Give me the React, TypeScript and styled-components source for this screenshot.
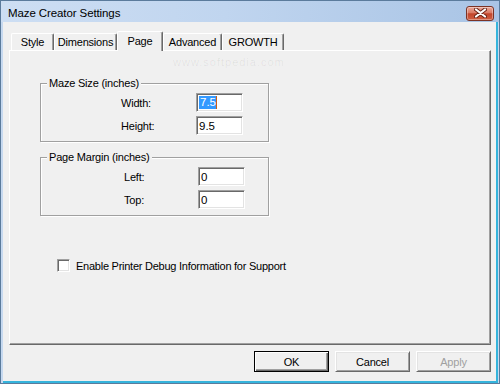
import React from "react";
import styled, { createGlobalStyle } from "styled-components";

const GlobalStyle = createGlobalStyle`
  html, body {
    margin: 0;
    padding: 0;
    background: #f0f0f0;
  }
  * {
    box-sizing: border-box;
  }
`;

const Window = styled.div`
  position: relative;
  width: 500px;
  height: 384px;
  display: flex;
  flex-direction: column;
  border: 1px solid #5b7b9c;
  padding: 0 1px 0 2px;
  background: #c6d9f0;
  font-family: "Liberation Sans", Arial, sans-serif;
  font-size: 11px;
  color: #000;
  overflow: hidden;
`;

const TitleBar = styled.div`
  height: 21px;
  margin-left: -2px;
  margin-right: -1px;
  display: flex;
  align-items: center;
  justify-content: space-between;
  padding: 0 5px 0 7px;
  background: linear-gradient(to right, #cddef3 0%, #c0d5ef 45%, #a9c4e5 100%);
`;

const Title = styled.span`
  font-size: 11.5px;
  letter-spacing: -0.1px;
  margin-top: 2px;
`;

const CloseButton = styled.div`
  width: 28px;
  height: 15px;
  margin-top: 3px;
  border: 1px solid #7c3325;
  border-radius: 3px;
  display: flex;
  align-items: center;
  justify-content: center;
  background: linear-gradient(#eba99a 0%, #da7a64 45%, #c2452b 52%, #cf5f42 100%);
  box-shadow: inset 0 0 0 1px rgba(255, 255, 255, 0.35);
`;

const Body = styled.div`
  flex: 1;
  display: flex;
  flex-direction: column;
  background: #f0f0f0;
  border-right: 2px solid #35b4dc;
  border-bottom: 2px solid #35b4dc;
  padding: 9px 5px 9px 6px;
`;

const TabStrip = styled.div`
  height: 19px;
  display: flex;
  align-items: flex-end;
  padding-left: 2px;
`;

const Tab = styled.div<{ $w: number; $active?: boolean }>`
  position: relative;
  z-index: ${(p) => (p.$active ? 2 : 1)};
  width: ${(p) => p.$w}px;
  height: ${(p) => (p.$active ? 20 : 17)}px;
  margin-bottom: ${(p) => (p.$active ? -1 : 0)}px;
  display: flex;
  align-items: center;
  justify-content: center;
  padding-bottom: ${(p) => (p.$active ? 2 : 0)}px;
  background: #f0f0f0;
  border-top: 1px solid #fff;
  border-left: 1px solid #fff;
  border-right: 1px solid #696969;
  border-radius: 2px 2px 0 0;
  box-shadow: inset -1px 0 0 #a0a0a0;
  letter-spacing: -0.2px;
  white-space: nowrap;
`;

const Panel = styled.div`
  flex: 1;
  display: flex;
  flex-direction: column;
  align-items: flex-start;
  padding: 32px 0 0 30px;
  border-top: 1px solid #fff;
  border-left: 1px solid #fff;
  border-right: 1px solid #696969;
  border-bottom: 1px solid #696969;
  box-shadow: inset -1px -1px 0 #a0a0a0;
`;

const Group = styled.div<{ $gapTop?: number }>`
  width: 229px;
  height: 59px;
  margin-top: ${(p) => p.$gapTop ?? 0}px;
  display: flex;
  flex-direction: column;
  align-items: flex-start;
  border: 1px solid #a0a0a0;
  box-shadow: 1px 1px 0 #fff, inset 1px 1px 0 #fff;
`;

const Legend = styled.span<{ $left: number }>`
  margin: -7px 0 0 ${(p) => p.$left}px;
  padding: 0 2px;
  line-height: 13px;
  background: #f0f0f0;
  letter-spacing: -0.2px;
  white-space: nowrap;
`;

const Rows = styled.div<{ $pad: number; $col: number }>`
  margin-top: 3px;
  padding-left: ${(p) => p.$pad}px;
  display: grid;
  grid-template-columns: ${(p) => p.$col}px 47px;
  row-gap: 4px;
  align-items: center;
`;

const Label = styled.span`
  letter-spacing: -0.2px;
  padding-top: 1px;
`;

const Field = styled.div`
  width: 47px;
  height: 19px;
  display: flex;
  align-items: center;
  padding-left: 2px;
  background: #fff;
  border-top: 1px solid #a0a0a0;
  border-left: 1px solid #a0a0a0;
  border-right: 1px solid #fff;
  border-bottom: 1px solid #fff;
  box-shadow: inset 1px 1px 0 #696969, inset -1px -1px 0 #e3e3e3;
  font-size: 11.5px;
`;

const Selected = styled.span`
  background: #3399ff;
  color: #fff;
  padding: 0 0 0 1px;
  line-height: 13px;
  border-right: 1px solid #c8601a;
`;

const CheckRow = styled.div`
  margin: 43px 0 0 17px;
  display: flex;
  align-items: center;
  gap: 6px;
`;

const CheckBox = styled.div`
  width: 13px;
  height: 13px;
  background: #fff;
  border-top: 1px solid #a0a0a0;
  border-left: 1px solid #a0a0a0;
  border-right: 1px solid #fff;
  border-bottom: 1px solid #fff;
  box-shadow: inset 1px 1px 0 #696969, inset -1px -1px 0 #e3e3e3;
`;

const CheckLabel = styled.span`
  letter-spacing: -0.25px;
`;

const ButtonRow = styled.div`
  margin-top: 6px;
  display: flex;
  justify-content: flex-end;
  gap: 6px;
`;

const Button = styled.div<{ $default?: boolean; $disabled?: boolean }>`
  width: 75px;
  height: 21px;
  display: flex;
  align-items: center;
  justify-content: center;
  background: #f0f0f0;
  color: ${(p) => (p.$disabled ? "#a0a0a0" : "#000")};
  border: 1px solid;
  border-top-color: ${(p) => (p.$default ? "#000" : "#fff")};
  border-left-color: ${(p) => (p.$default ? "#000" : "#fff")};
  border-right-color: ${(p) => (p.$default ? "#000" : "#696969")};
  border-bottom-color: ${(p) => (p.$default ? "#000" : "#696969")};
  box-shadow: ${(p) =>
    p.$default
      ? "inset 1px 1px 0 #fff, inset -1px -1px 0 #696969, inset -2px -2px 0 #a0a0a0"
      : "inset 1px 1px 0 #e3e3e3, inset -1px -1px 0 #a0a0a0"};
  letter-spacing: -0.2px;
`;

const Watermark = styled.span`
  position: absolute;
  left: 172px;
  top: 55px;
  font-size: 11px;
  color: rgba(0, 0, 0, 0.07);
  letter-spacing: 1px;
  pointer-events: none;
  white-space: nowrap;
`;

const tabs = [
  { label: "Style", w: 43 },
  { label: "Dimensions", w: 63 },
  { label: "Page", w: 46, active: true },
  { label: "Advanced", w: 59 },
  { label: "GROWTH", w: 62 },
];

function CloseGlyph() {
  return (
    <svg width="13" height="10" viewBox="0 0 13 10">
      <path d="M2 1.5 L11 8.5 M11 1.5 L2 8.5" stroke="#6a2417" strokeWidth="4" strokeLinecap="round" />
      <path d="M2 1.5 L11 8.5 M11 1.5 L2 8.5" stroke="#fff" strokeWidth="2.2" strokeLinecap="round" />
    </svg>
  );
}

export default function App() {
  return (
    <>
      <GlobalStyle />
      <Window>
        <TitleBar>
          <Title>Maze Creator Settings</Title>
          <CloseButton>
            <CloseGlyph />
          </CloseButton>
        </TitleBar>
        <Body>
          <TabStrip>
            {tabs.map((t) => (
              <Tab key={t.label} $w={t.w} $active={t.active}>
                {t.label}
              </Tab>
            ))}
          </TabStrip>
          <Panel>
            <Group>
              <Legend $left={6}>Maze Size (inches)</Legend>
              <Rows $pad={80} $col={75}>
                <Label>Width:</Label>
                <Field>
                  <Selected>7.5</Selected>
                </Field>
                <Label>Height:</Label>
                <Field>9.5</Field>
              </Rows>
            </Group>
            <Group $gapTop={15}>
              <Legend $left={6}>Page Margin (inches)</Legend>
              <Rows $pad={83} $col={74}>
                <Label>Left:</Label>
                <Field>0</Field>
                <Label>Top:</Label>
                <Field>0</Field>
              </Rows>
            </Group>
            <CheckRow>
              <CheckBox />
              <CheckLabel>Enable Printer Debug Information for Support</CheckLabel>
            </CheckRow>
          </Panel>
          <ButtonRow>
            <Button $default>OK</Button>
            <Button>Cancel</Button>
            <Button $disabled>Apply</Button>
          </ButtonRow>
        </Body>
        <Watermark>www.softpedia.com</Watermark>
      </Window>
    </>
  );
}
